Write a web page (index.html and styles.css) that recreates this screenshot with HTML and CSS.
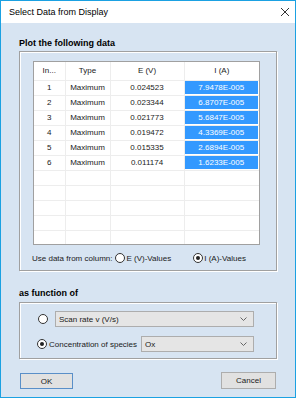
FILE: index.html
```html
<!DOCTYPE html>
<html lang="en">
<head>
    <meta charset="UTF-8">
    <title>Select Data from Display</title>
    <link rel="stylesheet" href="styles.css">
</head>
<body>
    <div class="window">
        <div class="titlebar">
            <span class="title">Select Data from Display</span>
            <svg class="close" width="10" height="10" viewBox="0 0 10 10">
                <path d="M1 1 L9 9 M9 1 L1 9" stroke="#333" stroke-width="1" fill="none"/>
            </svg>
        </div>

        <div class="content">
            <div class="section-title first">Plot the following data</div>
            <div class="group group-data">
                <div class="grid">
                    <table>
                        <thead>
                            <tr>
                                <th class="c-idx">In...</th>
                                <th class="c-type">Type</th>
                                <th class="c-e">E (V)</th>
                                <th class="c-i">I (A)</th>
                            </tr>
                        </thead>
                        <tbody>
                            <tr><td>1</td><td>Maximum</td><td>0.024523</td><td><span class="sel">7.9478E-005</span></td></tr>
                            <tr><td>2</td><td>Maximum</td><td>0.023344</td><td><span class="sel">6.8707E-005</span></td></tr>
                            <tr><td>3</td><td>Maximum</td><td>0.021773</td><td><span class="sel">5.6847E-005</span></td></tr>
                            <tr><td>4</td><td>Maximum</td><td>0.019472</td><td><span class="sel">4.3369E-005</span></td></tr>
                            <tr><td>5</td><td>Maximum</td><td>0.015335</td><td><span class="sel">2.6894E-005</span></td></tr>
                            <tr><td>6</td><td>Maximum</td><td>0.011174</td><td><span class="sel">1.6233E-005</span></td></tr>
                            <tr><td></td><td></td><td></td><td></td></tr>
                            <tr><td></td><td></td><td></td><td></td></tr>
                            <tr><td></td><td></td><td></td><td></td></tr>
                            <tr><td></td><td></td><td></td><td></td></tr>
                            <tr><td></td><td></td><td></td><td></td></tr>
                        </tbody>
                    </table>
                </div>
                <div class="column-choice">
                    <span>Use data from column:</span>
                    <span class="radio-item"><span class="radio"></span>E (V)-Values</span>
                    <span class="radio-item second"><span class="radio checked"></span>I (A)-Values</span>
                </div>
            </div>

            <div class="section-title">as function of</div>
            <div class="group group-func">
                <div class="func-row row-scan">
                    <span class="radio"></span>
                    <div class="combo combo-scan">
                        <span>Scan rate v (V/s)</span>
                        <svg width="7" height="4" viewBox="0 0 7 4"><path d="M0.5 0.5 L3.5 3.5 L6.5 0.5" stroke="#666" fill="none"/></svg>
                    </div>
                </div>
                <div class="func-row row-conc">
                    <span class="radio checked"></span>
                    <span class="conc-label">Concentration of species</span>
                    <div class="combo combo-species">
                        <span>Ox</span>
                        <svg width="7" height="4" viewBox="0 0 7 4"><path d="M0.5 0.5 L3.5 3.5 L6.5 0.5" stroke="#666" fill="none"/></svg>
                    </div>
                </div>
            </div>

            <div class="buttons">
                <button class="btn btn-default">OK</button>
                <button class="btn btn-cancel">Cancel</button>
            </div>
        </div>
    </div>
</body>
</html>
```

FILE: styles.css
```css
* {
    box-sizing: border-box;
}
body {
    margin: 0;
    font-family: "Liberation Sans", Arial, sans-serif;
    font-size: 8px;
    color: #1a1a1a;
    background: #ffffff;
}
.window {
    width: 296px;
    height: 398px;
    border: 1px solid #1ba1e2;
    background: #d7e4f2;
    display: flex;
    flex-direction: column;
}
.titlebar {
    height: 22px;
    background: #ffffff;
    display: flex;
    align-items: center;
    justify-content: space-between;
    padding: 0 5px 0 8px;
}
.title {
    font-size: 9px;
    color: #000;
}
.content {
    padding: 0 18px 0 18px;
}
.section-title {
    font-size: 9px;
    font-weight: bold;
    line-height: 11px;
    height: 11px;
    color: #000;
    margin-top: 17px;
}
.section-title.first {
    margin-top: 15px;
}
.group {
    border: 1px solid #a0a0a0;
    box-shadow: inset 1px 1px 0 #ffffff, 1px 1px 0 #ffffff;
}
.group-data {
    margin-top: 2px;
    height: 220px;
    padding: 9px 0 0 12px;
}
.grid {
    width: 227px;
    height: 184px;
    margin-left: 1px;
    background: #ffffff;
    border: 1px solid #a0a0a0;
    overflow: hidden;
}
table {
    border-collapse: collapse;
    table-layout: fixed;
    width: 225px;
}
th, td {
    padding: 0;
    text-align: center;
    font-weight: normal;
    border-right: 1px solid #ededed;
    white-space: nowrap;
}
th {
    height: 18px;
}
td {
    height: 15px;
    border-top: 1px solid #ededed;
}
.c-idx { width: 31px; }
.c-type { width: 45px; }
.c-e { width: 74px; }
.c-i { width: 75px; border-right: none; }
td:last-child {
    border-right: none;
}
.sel {
    display: block;
    margin: 0 1px 0 0;
    height: 13px;
    line-height: 13px;
    background: #3399ff;
    color: #ffffff;
}
.column-choice {
    margin-top: 7px;
    height: 12px;
    display: flex;
    align-items: center;
}
.radio-item {
    display: flex;
    align-items: center;
    gap: 1px;
    margin-left: 3px;
}
.radio-item.second {
    margin-left: 22px;
}
.radio {
    width: 10px;
    height: 10px;
    border: 1px solid #333;
    border-radius: 50%;
    background: #ffffff;
    display: inline-flex;
    align-items: center;
    justify-content: center;
    flex-shrink: 0;
}
.radio.checked::after {
    content: "";
    width: 4px;
    height: 4px;
    border-radius: 50%;
    background: #222;
}
.group-func {
    margin-top: 3px;
    height: 57px;
    padding: 8px 0 6px 0;
    display: flex;
    flex-direction: column;
    gap: 9px;
}
.func-row {
    display: flex;
    align-items: center;
    height: 16px;
}
.row-scan {
    padding-left: 18px;
    gap: 7px;
}
.row-conc {
    padding-left: 17px;
}
.conc-label {
    margin-left: 2px;
    margin-right: 4px;
}
.combo {
    height: 16px;
    background: #e5e5e5;
    border: 1px solid #adadad;
    display: flex;
    align-items: center;
    justify-content: space-between;
    padding: 0 6px 0 3px;
}
.combo-scan {
    width: 199px;
}
.combo-species {
    width: 113px;
}
.buttons {
    margin-top: 14px;
    display: flex;
    justify-content: space-between;
    padding: 0 1px;
}
.btn {
    height: 16px;
    font-family: "Liberation Sans", Arial, sans-serif;
    font-size: 8px;
    color: #1a1a1a;
    background: #e1e1e1;
    border: 1px solid #adadad;
    padding: 0;
}
.btn-default {
    width: 53px;
    border-color: #5a8fc8;
}
.btn-cancel {
    width: 55px;
    margin-top: -1px;
    height: 17px;
}
```
